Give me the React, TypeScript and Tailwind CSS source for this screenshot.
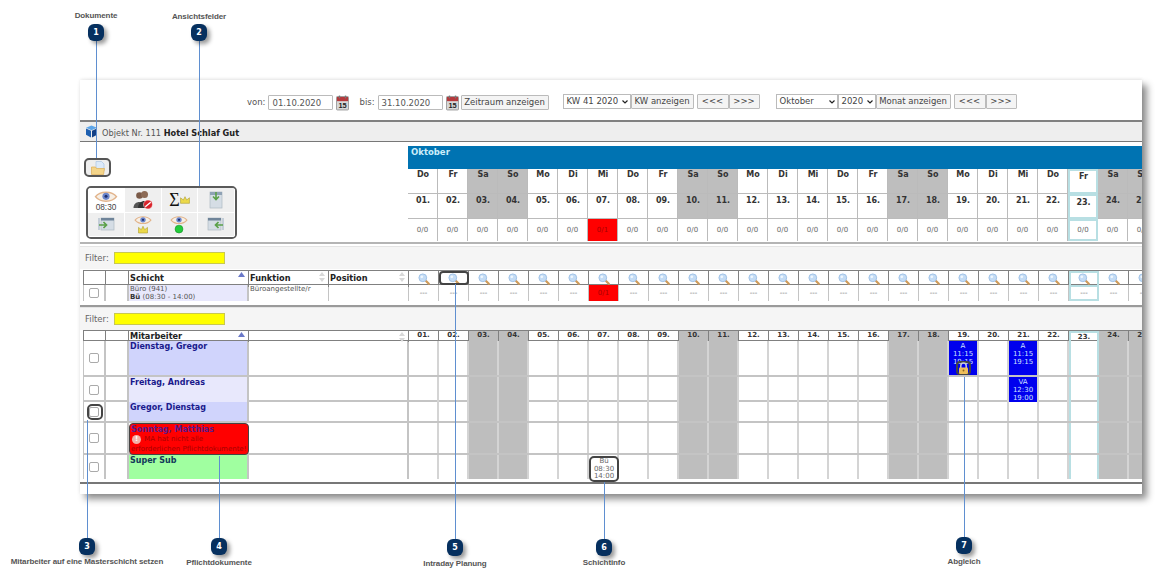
const dayNames = ['Do', 'Fr', 'Sa', 'So', 'Mo', 'Di', 'Mi'];
// only the days up to the 25th fit in the visible part of the table
const days = Array.from({ length: 25 }, (_, i) => ({
  num: String(i + 1).padStart(2, '0') + '.',
  name: dayNames[i % 7],
  weekend: i % 7 === 2 || i % 7 === 3,
  today: i === 22,
}));

const rowGrid = 'grid w-max grid-cols-[23px_23px_120px_80px_80px_repeat(25,30px)]';
const btn =
  'h-[15px] border border-[#bbb] bg-[#f4f4f4] rounded-[1px] text-[8.5px] leading-[13px] text-[#444] text-center';
const headCell = 'relative border-r border-[#808080] pl-[1px] text-[8.2px] font-bold text-[#222]';

const CalendarIcon = () => (
  <svg width="13" height="16" viewBox="0 0 14 16" className="shrink-0">
    <rect x="0.5" y="1" width="13" height="14.5" rx="1" fill="#d8d8d8" stroke="#999" />
    <rect x="1" y="1.5" width="12" height="4.5" fill="#b5393c" />
    <rect x="3" y="0" width="1.5" height="3" fill="#777" />
    <rect x="9.5" y="0" width="1.5" height="3" fill="#777" />
    <text x="7" y="13.5" textAnchor="middle" fontSize="8" fontWeight="700" fill="#222" fontFamily="'Liberation Sans', sans-serif">
      15
    </text>
  </svg>
);

const CubeIcon = () => (
  <svg width="13" height="13" viewBox="0 0 13 13">
    <path d="M6.5 0.5 12 2.8 6.5 5.2 1 2.8z" fill="#5da5e8" />
    <path d="M1 3.4 6 5.7V12.5L1 9.8z" fill="#1d5fb0" />
    <path d="M12 3.4 7 5.7V12.5L12 9.8z" fill="#123f86" />
  </svg>
);

const FolderIcon = () => (
  <svg width="14" height="14" viewBox="0 0 14 14">
    <path d="M5 0.5H10.5L13 3V10H5z" fill="#dceafa" stroke="#a9c4e2" strokeWidth="0.7" />
    <path d="M0.5 6H4.5L5.5 7.5H13.5L12.5 13.5H0.5z" fill="#f4d58a" stroke="#dcae55" strokeWidth="0.7" />
  </svg>
);

const SearchIcon = () => (
  <svg width="12" height="12" viewBox="0 0 12 12" className="mx-auto">
    <path d="M7.5 7.5 10.8 10.8" stroke="#cf9a58" strokeWidth="2.2" strokeLinecap="round" />
    <circle cx="4.8" cy="4.8" r="3.9" fill="#c4dcf5" stroke="#9cc0e6" strokeWidth="0.9" />
    <circle cx="3.8" cy="3.8" r="1.4" fill="#eef6fd" />
  </svg>
);

const Eye = () => (
  <g>
    <path d="M1 5C4 1 12 1 15 5 12 9 4 9 1 5z" fill="#f6efe6" stroke="#e2b48c" />
    <circle cx="8" cy="4.8" r="2.4" fill="#6c86cc" />
    <circle cx="8" cy="4.8" r="1" fill="#1d2f70" />
  </g>
);

const Crown = ({ x = 4, y = 10 }: { x?: number; y?: number }) => (
  <path transform={`translate(${x} ${y})`} d="M0 1 2.5 3 4 0 5.5 3 8 1V6H0z" fill="#ecd94a" stroke="#a8982a" strokeWidth="0.5" />
);

const WindowDown = () => (
  <svg width="14" height="18" viewBox="0 0 14 18">
    <rect x="1" y="1" width="12" height="16" fill="#d5dde5" stroke="#b0bac4" strokeWidth="0.7" />
    <rect x="1" y="1" width="12" height="3" fill="#8fa2b5" />
    <path d="M7 1V8M4 5.5 7 8.5 10 5.5" stroke="#5aa048" strokeWidth="1.6" fill="none" />
  </svg>
);

const WindowSide = ({ flip }: { flip?: boolean }) => (
  <svg width="18" height="14" viewBox="0 0 18 14" className={flip ? '-scale-x-100' : ''}>
    <rect x="4" y="1" width="13" height="12" fill="#d5dde5" stroke="#b0bac4" strokeWidth="0.7" />
    <rect x="4" y="1" width="13" height="2.5" fill="#6f8499" />
    <rect x="1" y="1" width="2" height="12" fill="#c4ced8" />
    <path d="M2 8H9M6.5 5 9.5 8 6.5 11" stroke="#5aa048" strokeWidth="1.7" fill="none" />
  </svg>
);

const PeopleIcon = () => (
  <svg width="20" height="20" viewBox="0 0 20 20">
    <circle cx="6.5" cy="5.5" r="3.3" fill="#7a5a48" />
    <path d="M0.5 18C0.5 10 12 10 12 18z" fill="#555" />
    <circle cx="11.5" cy="4.5" r="3.5" fill="#8c6a55" />
    <path d="M5 18C5 8.5 18 8.5 18 18z" fill="#333" />
    <circle cx="15" cy="14.5" r="4.5" fill="#d9232b" stroke="#fff" strokeWidth="0.5" />
    <path d="M12.3 16.8 17.7 12.2" stroke="#fff" strokeWidth="1.3" />
  </svg>
);

const LockIcon = () => (
  <svg width="11" height="12" viewBox="0 0 11 12">
    <path d="M2.8 6V3.8a2.7 2.7 0 0 1 5.4 0V6" fill="none" stroke="#c8ccd4" strokeWidth="1.5" />
    <rect x="1" y="5.5" width="9" height="6.5" rx="1" fill="#eebe5a" />
    <circle cx="5.5" cy="8.5" r="0.9" fill="#8a6420" />
  </svg>
);

const SortMark = ({ active }: { active?: boolean }) =>
  active ? (
    <svg width="7" height="5" viewBox="0 0 7 5" className="absolute top-[1px] right-[3px]">
      <path d="M3.5 0 7 5H0z" fill="#6a78c8" />
    </svg>
  ) : (
    <svg width="6" height="10" viewBox="0 0 6 10" className="absolute top-[1px] right-[3px]">
      <path d="M3 0 6 4H0zM3 10 0 6H6z" fill="#d8d8d8" />
    </svg>
  );

const Select = ({ label, width }: { label: string; width: string }) => (
  <div className={`flex h-[15px] items-center justify-between border border-[#bbb] bg-white pr-[2px] pl-[3px] text-[8.5px] text-[#444] ${width}`}>
    <span className="whitespace-nowrap">{label}</span>
    <svg width="6" height="4" viewBox="0 0 6 4">
      <path d="M0.5 0.5 3 3 5.5 0.5" fill="none" stroke="#222" strokeWidth="1.2" />
    </svg>
  </div>
);

const ToolCell = ({ active, children }: { active?: boolean; children: React.ReactNode }) => (
  <div className={`flex items-center justify-center border-r border-b border-white ${active ? 'bg-white' : 'bg-[#efefef]'}`}>
    {children}
  </div>
);

const Callout = ({
  num,
  label,
  x,
  badgeY,
  labelY,
  lineFrom,
  lineTo,
}: {
  num: number;
  label: string;
  x: number;
  badgeY: number;
  labelY: number;
  lineFrom: number;
  lineTo: number;
}) => (
  <>
    <div className="absolute w-px bg-[#5f8fd0]" style={{ left: x, top: lineFrom, height: lineTo - lineFrom }} />
    <div
      className="absolute flex h-[17px] w-[16px] items-center justify-center rounded-[6px] bg-[#06305f] text-[8px] font-bold text-white shadow-[3px_3px_4px_rgba(0,0,0,0.4)]"
      style={{ left: x - 8, top: badgeY }}
    >
      {num}
    </div>
    <div
      className="absolute w-[240px] text-center font-['Liberation_Sans',sans-serif] text-[8px] leading-[10px] font-bold tracking-[-0.1px] text-[#555]"
      style={{ left: x - 120, top: labelY }}
    >
      {label}
    </div>
  </>
);

const CalRow = ({ h, render }: { h: string; render: (d: (typeof days)[number], i: number) => React.ReactNode }) => (
  <div className={`flex w-max ${h}`}>{days.map(render)}</div>
);

const Filter = () => (
  <div className="flex h-[23px] items-center gap-[5px] border-t border-[#e4e4e4] bg-[#f5f5f5] pl-[5px]">
    <span className="text-[8.5px] text-[#666]">Filter:</span>
    <div className="h-[12px] w-[111px] border border-[#c8c850] bg-[#ffff00]" />
  </div>
);

const CheckCell = () => (
  <div className="flex items-center justify-center border-r-2 border-l border-[#c4c4c4]">
    <input type="checkbox" readOnly className="h-[10px] w-[10px] appearance-none rounded-[2px] border border-[#aaa] bg-white" />
  </div>
);

const staff = [
  { name: 'Dienstag, Gregor', bg: 'bg-[#d0d4fc]', h: 'h-[36px]' },
  { name: 'Freitag, Andreas', bg: 'bg-[#e8e8fc]', h: 'h-[25px]' },
  { name: 'Gregor, Dienstag', bg: 'bg-[#d0d4fc]', h: 'h-[21px]' },
  { name: 'Sonntag, Matthias', bg: 'bg-[#ff0000]', h: 'h-[32px]' },
  { name: 'Super Sub', bg: 'bg-[#a0ffa0]', h: 'h-[24px]' },
];

const Shift = ({ lines }: { lines: string[] }) => (
  <div className="h-full w-full bg-[#0000ee] pt-[1px] text-center text-[7px] leading-[8px] text-[#cfe0ff]">
    {lines.map((l) => (
      <div key={l}>{l}</div>
    ))}
  </div>
);

const todayCell = 'border-2 border-[#b8dfe3]';

export default function App() {
  return (
    <div className="relative h-[588px] w-[1158px] overflow-hidden bg-white pt-[80px] pl-[80px] font-['DejaVu_Sans',sans-serif]">
      <div className="h-[414px] w-[1062px] overflow-hidden bg-white shadow-[5px_5px_7px_rgba(0,0,0,0.45),0_-1px_3px_rgba(0,0,0,0.08)]">
        {/* top bar with date range */}
        <div className="flex h-[42px] items-center border-b-2 border-[#808080] pt-[5px] pl-[167px] text-[#555]">
          <span className="text-[8.5px]">von:</span>
          <div className="ml-[3px] h-[15px] w-[65px] rounded-[1px] border border-[#bbb] pl-[3px] text-[8.5px] leading-[14px]">01.10.2020</div>
          <div className="ml-[3px]">
            <CalendarIcon />
          </div>
          <span className="ml-[10px] text-[8.5px]">bis:</span>
          <div className="ml-[3px] h-[15px] w-[65px] rounded-[1px] border border-[#bbb] pl-[3px] text-[8.5px] leading-[14px]">31.10.2020</div>
          <div className="ml-[3px]">
            <CalendarIcon />
          </div>
          <div className={`${btn} ml-[2px] w-[88px]`}>Zeitraum anzeigen</div>
          <div className="ml-[14px] -translate-y-px">
            <Select label="KW 41 2020" width="w-[68px]" />
          </div>
          <div className={`${btn} w-[63px] -translate-y-px`}>KW anzeigen</div>
          <div className={`${btn} ml-[3px] w-[32px] -translate-y-px`}>&lt;&lt;&lt;</div>
          <div className={`${btn} w-[31px] -translate-y-px`}>&gt;&gt;&gt;</div>
          <div className="ml-[16px] flex -translate-y-px">
            <Select label="Oktober" width="w-[62px]" />
            <Select label="2020" width="w-[38px]" />
          </div>
          <div className={`${btn} w-[75px] -translate-y-px`}>Monat anzeigen</div>
          <div className={`${btn} ml-[3px] w-[32px] -translate-y-px`}>&lt;&lt;&lt;</div>
          <div className={`${btn} w-[31px] -translate-y-px`}>&gt;&gt;&gt;</div>
        </div>

        {/* object title */}
        <div className="flex h-[20px] items-center gap-[4px] border-b border-[#777] bg-[#eeeeee] pl-[5px] text-[8.2px] text-[#555]">
          <CubeIcon />
          <span className="pt-[3px]">
            Objekt Nr. 111 <b className="text-[#222]">Hotel Schlaf Gut</b>
          </span>
        </div>

        {/* tools + calendar head */}
        <div className="flex h-[102px] border-b-2 border-[#b4b4b4]">
          <div className="w-[328px] shrink-0 pt-[16px] pl-[4px]">
            <div className="flex h-[19px] w-[27px] items-center justify-center rounded-[5px] border-2 border-[#555] bg-[#eeeeee]">
              <FolderIcon />
            </div>
            <div className="mt-[9px] ml-[2px] grid h-[53px] w-[151px] grid-cols-4 grid-rows-2 overflow-hidden rounded-[5px] border-2 border-[#5a5a5a]">
              <ToolCell active>
                <svg width="24" height="22" viewBox="0 0 16 14.5">
                  <Eye />
                  <text x="8" y="14" textAnchor="middle" fontSize="5.5" fill="#444" fontFamily="'Liberation Sans', sans-serif">
                    08:30
                  </text>
                </svg>
              </ToolCell>
              <ToolCell>
                <PeopleIcon />
              </ToolCell>
              <ToolCell>
                <span className="font-['Liberation_Serif',serif] text-[18px] leading-none text-[#111]">Σ</span>
                <svg width="10" height="8" viewBox="0 0 9 7">
                  <Crown x={0.5} y={0.5} />
                </svg>
              </ToolCell>
              <ToolCell>
                <WindowDown />
              </ToolCell>
              <ToolCell>
                <WindowSide />
              </ToolCell>
              <ToolCell>
                <svg width="18" height="20" viewBox="0 0 16 17">
                  <Eye />
                  <Crown x={4} y={10.5} />
                </svg>
              </ToolCell>
              <ToolCell>
                <svg width="18" height="20" viewBox="0 0 16 17">
                  <Eye />
                  <circle cx="8" cy="13" r="3.5" fill="#22cc3a" stroke="#118a22" strokeWidth="0.5" />
                </svg>
              </ToolCell>
              <ToolCell>
                <WindowSide flip />
              </ToolCell>
            </div>
          </div>
          <div className="min-w-0 flex-1 overflow-hidden pt-[4px]">
            <div className="h-[23px] bg-[#0073b2] pt-[1px] pl-[3px] text-[8.5px] leading-[10px] font-bold text-[#cdeefa]">Oktober</div>
            <CalRow
              h="h-[25px]"
              render={(d) => (
                <div
                  key={d.num}
                  className={`w-[30px] pt-[1px] pl-[1px] text-center text-[8px] leading-[10px] font-bold text-[#333] ${d.weekend ? 'bg-[#bebebe]' : ''} ${
                    d.today ? todayCell : 'border-r border-b border-[#bbb]'
                  }`}
                >
                  {d.name}
                </div>
              )}
            />
            <CalRow
              h="h-[25px]"
              render={(d) => (
                <div
                  key={d.num}
                  className={`w-[30px] pt-[2px] pl-[1px] text-center text-[8px] leading-[10px] font-bold text-[#333] ${d.weekend ? 'bg-[#bebebe]' : ''} ${
                    d.today ? todayCell : 'border-r border-b border-[#bbb]'
                  }`}
                >
                  {d.num}
                </div>
              )}
            />
            <CalRow
              h="h-[22px]"
              render={(d, i) => (
                <div
                  key={d.num}
                  className={`flex w-[30px] items-center justify-center text-[7px] ${i === 6 ? 'bg-[#ff0000] text-[#a80000]' : 'text-[#666]'} ${
                    d.today ? todayCell : 'border-r border-[#bbb]'
                  }`}
                >
                  {i === 6 ? '0/1' : '0/0'}
                </div>
              )}
            />
          </div>
        </div>

        {/* shifts table */}
        <div className="mt-[2px]">
          <Filter />
        </div>
        <div className="mt-[1px] overflow-hidden pl-[3px]">
          <div className={`${rowGrid} h-[15px] border-y border-[#808080]`}>
            <div className="border-r border-l border-[#808080]" />
            <div className="border-r border-[#808080]" />
            <div className={`${headCell} leading-[14px]`}>
              Schicht
              <SortMark active />
            </div>
            <div className={`${headCell} leading-[14px]`}>
              Funktion
              <SortMark />
            </div>
            <div className={`${headCell} leading-[14px]`}>
              Position
              <SortMark />
            </div>
            {days.map((d) => (
              <div key={d.num} className={`flex items-center ${d.today ? todayCell : 'border-r border-[#808080]'}`}>
                <SearchIcon />
              </div>
            ))}
          </div>
          <div className={`${rowGrid} h-[16px]`}>
            <CheckCell />
            <div className="border-r-2 border-[#c4c4c4]" />
            <div className="border-r-2 border-[#c4c4c4] bg-[#e8e8fc] pl-[1px] text-[7px] leading-[8px] text-[#555]">
              Büro (941)
              <br />
              <b className="text-[#333]">Bü</b> (08:30 - 14:00)
            </div>
            <div className="border-r border-[#c4c4c4] pl-[1px] text-[7px] leading-[8px] text-[#555]">Büroangestellte/r</div>
            <div className="border-r border-[#c4c4c4]" />
            {days.map((d, i) => (
              <div
                key={d.num}
                className={`flex items-center justify-center text-[7px] ${i === 6 ? 'bg-[#ff0000] text-[#a80000]' : 'text-[#666]'} ${
                  d.today ? todayCell : 'border-r border-[#c4c4c4]'
                }`}
              >
                {i === 6 ? '0/1' : '---'}
              </div>
            ))}
          </div>
        </div>

        {/* staff table */}
        <div className="mt-[4px] border-t-2 border-[#9a9a9a]">
          <Filter />
        </div>
        <div className="overflow-hidden pb-[3px] pl-[3px]">
          <div className={`${rowGrid} h-[11px] border-y border-[#808080]`}>
            <div className="border-r border-l border-[#808080]" />
            <div className="border-r border-[#808080]" />
            <div className={`${headCell} leading-[10px]`}>
              Mitarbeiter
              <SortMark active />
            </div>
            <div className="relative col-span-2 border-r border-[#808080]">
              <SortMark />
            </div>
            {days.map((d) => (
              <div
                key={d.num}
                className={`text-center text-[7px] leading-[9px] font-bold text-[#333] ${d.weekend ? 'bg-[#bebebe]' : ''} ${
                  d.today ? 'border-x-2 border-t-2 border-[#b8dfe3]' : 'border-r border-[#808080]'
                }`}
              >
                {d.num}
              </div>
            ))}
          </div>
          {staff.map((s, r) => (
            <div key={s.name} className={`${rowGrid} ${s.h} ${r < 4 ? 'border-b-2 border-[#c4c4c4]' : ''}`}>
              <CheckCell />
              <div className="border-r-2 border-[#c4c4c4]" />
              <div
                className={`overflow-hidden pl-[1px] text-[8px] font-bold ${s.bg} ${
                  r === 3
                    ? '-mb-[2px] rounded-[4px] border-[1.5px] border-[#444] pt-[1px] leading-[9px] text-[#5a1a8c]'
                    : r === 4
                      ? 'border-r-2 border-[#c4c4c4] leading-[12px] text-[#123a5a]'
                      : 'border-r-2 border-[#c4c4c4] leading-[12px] text-[#1a1a8c]'
                }`}
              >
                {s.name}
                {r === 3 && (
                  <div className="text-[7px] leading-[10px] font-normal text-[#a80000]">
                    <span className="mx-[1px] inline-block h-[9px] w-[9px] rounded-full bg-[#f4b0a8] text-center text-[7px] leading-[9px] font-bold text-white">!</span>
                    {' '}MA hat nicht alle
                    <div className="whitespace-nowrap">erforderlichen Pflichtdokumente!</div>
                  </div>
                )}
              </div>
              <div className="col-span-2 border-r-2 border-[#c4c4c4]" />
              {days.map((d, i) => (
                <div
                  key={d.num}
                  className={`relative ${d.weekend ? 'bg-[#bebebe]' : ''} ${d.today ? 'border-x-2 border-[#b8dfe3]' : 'border-r-2 border-[#d4d4d4]'}`}
                >
                  {r === 0 && i === 18 && <Shift lines={['A', '11:15', '19:15']} />}
                  {r === 0 && i === 18 && (
                    <div className="absolute bottom-0 left-[7px] flex h-[14px] w-[15px] items-center justify-center rounded-[4px] border-2 border-[#444]">
                      <LockIcon />
                    </div>
                  )}
                  {r === 0 && i === 20 && <Shift lines={['A', '11:15', '19:15']} />}
                  {r === 1 && i === 20 && <Shift lines={['VA', '12:30', '19:00']} />}
                  {r === 4 && i === 6 && (
                    <div className="absolute top-[1px] left-0 h-[26px] w-[30px] rounded-[5px] border-2 border-[#444] bg-white text-center text-[7px] leading-[7.5px] text-[#666]">
                      Bü
                      <br />
                      08:30
                      <br />
                      14:00
                    </div>
                  )}
                </div>
              ))}
            </div>
          ))}
        </div>
        <div className="h-[2px] bg-[#777]" />
      </div>

      <div className="absolute top-[271px] left-[439px] h-[14px] w-[30px] rounded-[4px] border-2 border-[#444]" />
      <div className="absolute top-[404px] left-[87px] h-[16px] w-[16px] rounded-[5px] border-2 border-[#444]" />

      <Callout num={1} label="Dokumente" x={96} badgeY={24} labelY={11} lineFrom={41} lineTo={158} />
      <Callout num={2} label="Ansichtsfelder" x={199} badgeY={24} labelY={12} lineFrom={41} lineTo={186} />
      <Callout num={3} label="Mitarbeiter auf eine Masterschicht setzen" x={87} badgeY={538} labelY={557} lineFrom={420} lineTo={538} />
      <Callout num={4} label="Pflichtdokumente" x={219} badgeY={538} labelY={558} lineFrom={456} lineTo={538} />
      <Callout num={5} label="Intraday Planung" x={455} badgeY={539} labelY={559} lineFrom={284} lineTo={539} />
      <Callout num={6} label="Schichtinfo" x={604} badgeY={539} labelY={558} lineFrom={482} lineTo={539} />
      <Callout num={7} label="Abgleich" x={964} badgeY={537} labelY={557} lineFrom={377} lineTo={537} />
    </div>
  );
}
